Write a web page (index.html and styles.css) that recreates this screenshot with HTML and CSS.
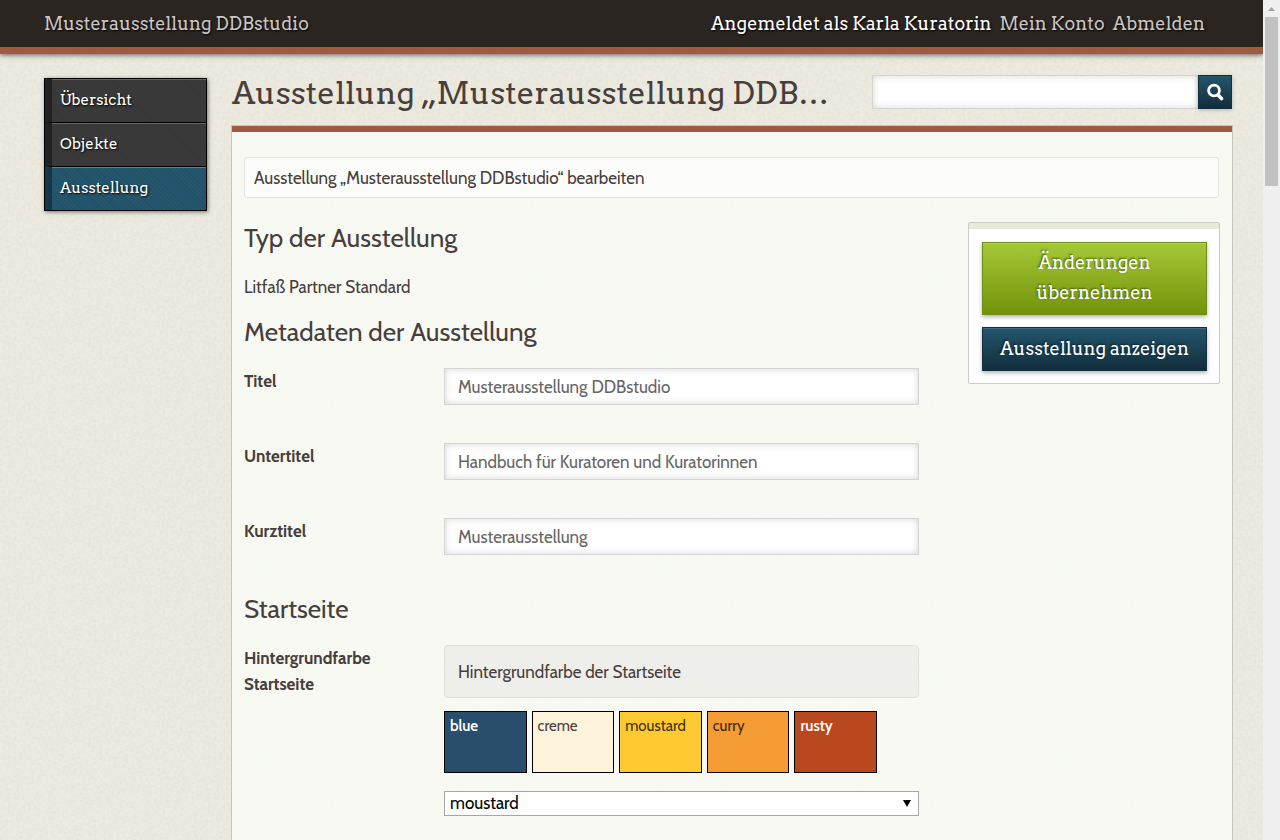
FILE: index.html
```html
<!DOCTYPE html>
<html lang="de">
<head>
<meta charset="utf-8">
<title>Ausstellung bearbeiten</title>
<link rel="stylesheet" href="styles.css">
</head>
<body>
<div class="viewport">
  <div class="page">
    <header class="topbar">
      <a class="brand" href="#">Musterausstellung DDBstudio</a>
      <nav class="account" aria-label="Konto">
        <strong class="user">Angemeldet als Karla Kuratorin</strong>
        <a href="#">Mein Konto</a>
        <a href="#">Abmelden</a>
      </nav>
    </header>
    <div class="columns">
      <nav class="menu" aria-label="Hauptmenü">
        <a class="menu-item" href="#">Übersicht</a>
        <a class="menu-item" href="#">Objekte</a>
        <a class="menu-item active" href="#" aria-current="page">Ausstellung</a>
      </nav>
      <main class="main">
        <div class="title-row">
          <h1>Ausstellung „Musterausstellung DDB…</h1>
          <form class="search" role="search">
            <input type="search" aria-label="Suche">
            <button type="button" aria-label="Suchen">
              <svg viewBox="0 0 18 18" width="18" height="18" fill="none" stroke="#fff" aria-hidden="true"><circle cx="8" cy="7.500" r="5.400" stroke-width="2.800"/><path d="M12 12l3.500 3.500" stroke-width="3.600" stroke-linecap="round"/></svg>
            </button>
          </form>
        </div>
        <div class="panel">
          <div class="crumb">Ausstellung „Musterausstellung DDBstudio“ bearbeiten</div>
          <div class="panel-body">
            <form class="fields">
              <h2>Typ der Ausstellung</h2>
              <p>Litfaß Partner Standard</p>
              <h2>Metadaten der Ausstellung</h2>
              <div class="row"><label for="titel">Titel</label><input id="titel" type="text" value="Musterausstellung DDBstudio"></div>
              <div class="row"><label for="untertitel">Untertitel</label><input id="untertitel" type="text" value="Handbuch für Kuratoren und Kuratorinnen"></div>
              <div class="row"><label for="kurztitel">Kurztitel</label><input id="kurztitel" type="text" value="Musterausstellung"></div>
              <h2>Startseite</h2>
              <div class="row">
                <label for="farbe">Hintergrundfarbe Startseite</label>
                <div class="colour-field">
                  <div class="hint">Hintergrundfarbe der Startseite</div>
                  <div class="swatches">
                    <div class="swatch blue">blue</div>
                    <div class="swatch creme">creme</div>
                    <div class="swatch moustard">moustard</div>
                    <div class="swatch curry">curry</div>
                    <div class="swatch rusty">rusty</div>
                  </div>
                  <div class="select-wrap">
                    <select id="farbe">
                      <option>blue</option>
                      <option>creme</option>
                      <option selected>moustard</option>
                      <option>curry</option>
                      <option>rusty</option>
                    </select>
                    <svg class="arrow" viewBox="0 0 8 7" width="8" height="7" aria-hidden="true"><path d="M0 0h8L4 7z"/></svg>
                  </div>
                </div>
              </div>
            </form>
            <aside class="actions">
              <button class="btn save" type="button">Änderungen übernehmen</button>
              <button class="btn show" type="button">Ausstellung anzeigen</button>
            </aside>
          </div>
        </div>
      </main>
    </div>
  </div>
  <div class="scrollbar" aria-hidden="true">
    <svg viewBox="0 0 17 17" width="17" height="17"><path d="M5 11h7L8.500 7z" fill="#a3a3a3"/></svg>
    <div class="thumb"></div>
  </div>
</div>
</body>
</html>
```
FILE: styles.css
```css
* { box-sizing: border-box; }

body {
  margin: 0;
  color: #483e3c;
  font: 17px/26px Cabin, Lato, "Open Sans", sans-serif;
}

h1, h2, p { margin: 0; font-weight: 400; }
a { text-decoration: none; }
input, select, button { margin: 0; font: inherit; border-radius: 0; }

.viewport { display: flex; height: 100vh; overflow: hidden; }

.page {
  flex: 1;
  min-width: 0;
  display: flex;
  flex-direction: column;
  background: #edebe0 url("data:image/svg+xml,%3Csvg xmlns='http://www.w3.org/2000/svg' width='200' height='200'%3E%3Cfilter id='n'%3E%3CfeTurbulence type='fractalNoise' baseFrequency='.35' numOctaves='3' stitchTiles='stitch'/%3E%3CfeColorMatrix values='0 0 0 0 .45 0 0 0 0 .42 0 0 0 0 .3 0 0 0 .22 -.07'/%3E%3C/filter%3E%3Crect width='200' height='200' filter='url(%23n)'/%3E%3C/svg%3E");
}

.topbar {
  flex: none;
  display: flex;
  justify-content: space-between;
  align-items: center;
  height: 54px;
  padding: 0 58px 0 44px;
  background: #2a2521;
  border-bottom: 7px solid #a05a41;
  box-shadow: 0 1px 5px rgba(0, 0, 0, .6);
  font: 18px/26px Arvo, "DejaVu Serif", serif;
  text-shadow: 1px 1px 2px #000;
  white-space: nowrap;
}
.topbar a { color: #c8c5c2; }
.account { display: flex; gap: 8px; }
.user { color: #fff; font-weight: 400; }

.columns {
  flex: 1;
  min-height: 0;
  display: flex;
  gap: 25px;
  padding: 21px 31px 0 44px;
}

.menu {
  flex: none;
  align-self: flex-start;
  width: 163px;
  margin-top: 3px;
  border: 1px solid #000;
  border-top-width: 0;
  box-shadow: 1px 1px 4px rgba(0, 0, 0, .5);
}
.menu-item {
  display: block;
  height: 44px;
  padding: 8px;
  border-top: 1px solid #000;
  border-left: 7px solid #222;
  background: #3a3a3a repeating-linear-gradient(45deg, rgba(0, 0, 0, .06) 0 1px, transparent 1px 3px);
  box-shadow: inset 0 1px #666;
  color: #fff;
  font: 15px/26px Arvo, "DejaVu Serif", serif;
  text-shadow: 1px 1px 2px #000;
}
.menu-item.active {
  border-left-color: #16364a;
  background-color: #24566d;
  box-shadow: inset 0 1px #5c8294;
}

.main { flex: 1; min-width: 0; display: flex; flex-direction: column; }

.title-row {
  flex: none;
  display: flex;
  justify-content: space-between;
  height: 51px;
}
h1 {
  font: 31px/36px Arvo, "DejaVu Serif", serif;
  white-space: nowrap;
}
.search { display: flex; width: 36%; height: 34px; }
.search input, .row input {
  flex: 1;
  min-width: 0;
  border: 1px solid #d4d4d2;
  background: #fff;
  box-shadow: inset 0 0 7px rgba(0, 0, 0, .16);
  color: #666;
}
.search input { border-right: 0; appearance: none; }
.search button {
  width: 34px;
  display: grid;
  place-items: center;
  padding: 0;
  border: 1px solid #123040;
  background: linear-gradient(#23556b, #122d3c);
  box-shadow: 0 1px 4px rgba(30, 60, 80, .3);
}

.panel {
  flex: 1;
  min-height: 0;
  padding: 25px 12px 0;
  border-top: 6px solid #a05a41;
  background: rgba(250, 252, 248, .8);
  box-shadow: 0 0 0 1px #c6c5bc;
}
.crumb {
  height: 41px;
  margin-right: 1px;
  padding: 7px 9px;
  border: 1px solid #e5e6e3;
  border-radius: 3px;
  background: rgba(255, 255, 255, .6);
}
.panel-body {
  display: flex;
  align-items: flex-start;
  gap: 49px;
  margin-top: 24px;
}
.fields { flex: 1; min-width: 0; }
h2 { margin-bottom: 20px; font-size: 26px; line-height: 32px; }
p { margin-bottom: 16px; }
.row { display: flex; align-items: flex-start; margin-bottom: 38px; }
.row label { flex: none; width: 200px; padding-right: 40px; font-weight: 700; }
.row input { height: 37px; padding: 0 13px; }

.colour-field { flex: 1; min-width: 0; }
.hint {
  padding: 13px 13px 12px;
  border: 1px solid #dfe0dc;
  border-radius: 4px;
  background: #eeeeea;
}
.swatches { display: flex; gap: 5px; margin: 13px 0 18px; padding-right: 42px; }
.swatch {
  flex: 1;
  height: 62px;
  padding: 1px 5px;
  border: 1px solid #000;
  font-size: 15px;
}
.blue { background: #284e6c; color: #fff; font-weight: 600; }
.creme { background: #fdf2da; }
.moustard { background: #fdca31; color: #40310c; }
.curry { background: #f59c35; color: #40290c; }
.rusty { background: #b9481f; color: #fff; font-weight: 600; }

.select-wrap { display: grid; align-items: center; }
.select-wrap > * { grid-area: 1 / 1; }
.select-wrap select {
  width: 100%;
  height: 25px;
  padding: 0 5px;
  appearance: none;
  border: 1px solid #a6a6a6;
  background: #fff;
  color: #000;
  line-height: 23px;
}
.arrow { justify-self: end; margin-right: 8px; pointer-events: none; }

.actions {
  flex: none;
  width: 252px;
  display: flex;
  flex-direction: column;
  gap: 12px;
  padding: 19px 12px 12px 13px;
  border: 1px solid #cbcdca;
  border-radius: 2px;
  background: linear-gradient(#eae7dc 6px, #fff 6px);
}
.btn {
  padding: 6px 16px;
  border: 1px solid;
  color: #fff;
  font: 18px/30px Arvo, "DejaVu Serif", serif;
}
.save {
  padding: 5px 16px 6px;
  border-color: #6f8c17;
  background: linear-gradient(#a5c837, #73930b);
  box-shadow: inset 0 1px #b2d04e, 0 2px 4px rgba(0, 0, 0, .3);
  text-shadow: -1px -1px 2px #47600c;
}
.show {
  border-color: #123040;
  background: linear-gradient(#23566d, #122d3b);
  box-shadow: inset 0 1px #41697c, 0 2px 4px rgba(0, 0, 0, .3);
  text-shadow: -1px -1px 2px #08202d;
}

.scrollbar { flex: none; width: 17px; background: #f0f0f0; }
.scrollbar svg { display: block; }
.thumb { height: 169px; margin: 0 2px; background: #c1c1c1; }
```
